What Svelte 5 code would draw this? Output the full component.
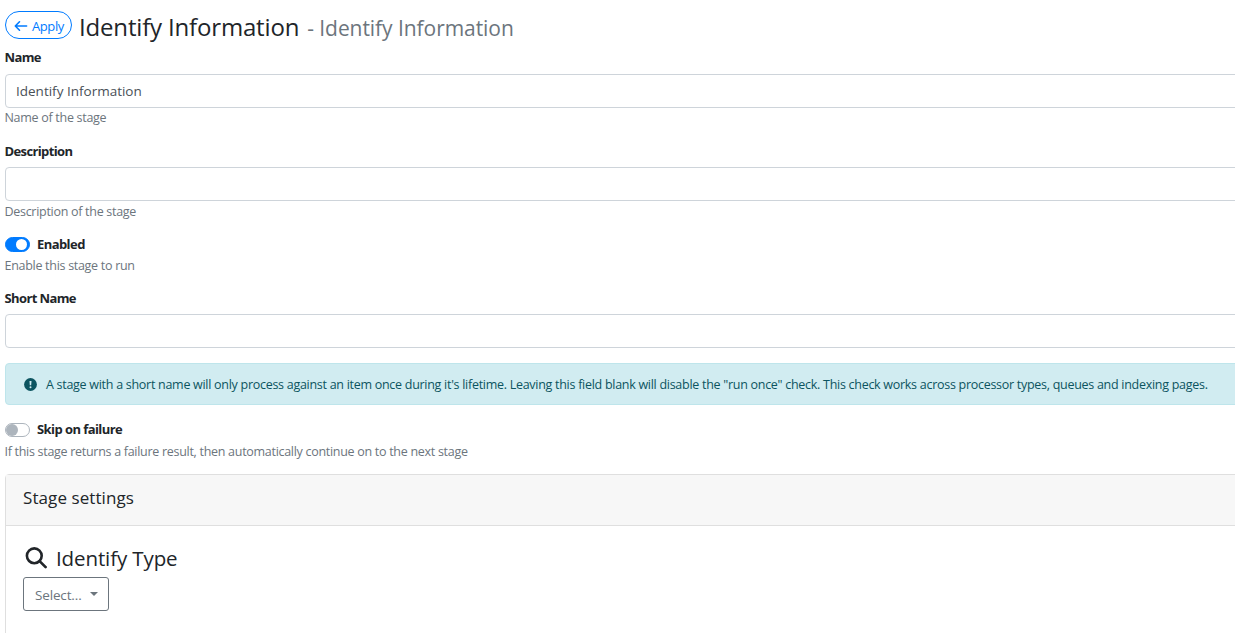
<script>
  let name = $state('Identify Information');
  let description = $state('');
  let shortName = $state('');
  let enabled = $state(true);
  let skip = $state(false);
</script>

<main class="viewport">
  <div class="form">
    <header class="title">
      <button class="apply">
        <svg width="14" height="14" viewBox="0 0 14 14" fill="none" stroke="currentColor" stroke-width="1.6" stroke-linecap="round" stroke-linejoin="round"><path d="M12.6 7H1.4M5.5 2.8 1.3 7l4.2 4.2" /></svg>
        <span>Apply</span>
      </button>
      <h1>Identify Information</h1>
      <span class="sub">- Identify Information</span>
    </header>

    <section class="group first">
      <label class="label" for="name">Name</label>
      <input id="name" type="text" bind:value={name} />
      <small class="help">Name of the stage</small>
    </section>

    <section class="group described">
      <label class="label" for="description">Description</label>
      <input id="description" type="text" bind:value={description} />
      <small class="help">Description of the stage</small>
    </section>

    <section class="switch-group enabled">
      <label class="switch">
        <input type="checkbox" bind:checked={enabled} />
        <span class="track" class:on={enabled}></span>
        <span class="label">Enabled</span>
      </label>
      <small class="help">Enable this stage to run</small>
    </section>

    <section class="group short">
      <label class="label" for="short">Short Name</label>
      <input id="short" type="text" bind:value={shortName} />
    </section>

    <div class="alert">
      <svg width="13" height="13" viewBox="0 0 13 13"><circle cx="6.5" cy="6.5" r="6.4" fill="#0c5460" /><path d="M5.5 2.9h2l-.3 4.3H5.8z" fill="#d1ecf1" /><circle cx="6.5" cy="9.2" r="1" fill="#d1ecf1" /></svg>
      <span>A stage with a short name will only process against an item once during it's lifetime. Leaving this field blank will disable the "run once" check. This check works across processor types, queues and indexing pages.</span>
    </div>

    <section class="switch-group skip">
      <label class="switch">
        <input type="checkbox" bind:checked={skip} />
        <span class="track" class:on={skip}></span>
        <span class="label">Skip on failure</span>
      </label>
      <small class="help">If this stage returns a failure result, then automatically continue on to the next stage</small>
    </section>

    <section class="card">
      <div class="card-header"><span>Stage settings</span></div>
      <div class="card-body">
        <h2>
          <svg width="22" height="22" viewBox="0 0 22 22" fill="none" stroke="#212529" stroke-width="2.6"><circle cx="9.3" cy="8.8" r="7.4" /><path d="m14.6 14.1 6 6" stroke-linecap="round" stroke-width="2.7" /></svg>
          <span>Identify Type</span>
        </h2>
        <button class="select"><span>Select...</span><i class="caret"></i></button>
      </div>
    </section>
  </div>
</main>

<style>
  :global(body) { background: #fff; overflow: hidden; }
  * { box-sizing: border-box; }
  .viewport {
    height: 633px; overflow: hidden; color: #212529;
    font-family: "Open Sans", "Noto Sans", sans-serif; font-size: 13px; line-height: 20px;
  }
  .form { width: 1250px; padding-left: 5px; }
  span, h1 { white-space: nowrap; }
  .title { display: flex; align-items: flex-start; height: 47px; padding-top: 11px; }
  .apply {
    display: flex; align-items: center; gap: 4px; width: 67px; height: 28px; padding: 2px 0 0 8px;
    border: 1px solid #007bff; border-radius: 14px; background: #fff; color: #007bff;
    font: 13px/20px "Open Sans", sans-serif; letter-spacing: -0.4px;
  }
  .apply svg { flex: none; }
  h1 { margin: 1px 0 0 7px; font-size: 24px; font-weight: 400; line-height: 30px; letter-spacing: -0.17px; }
  .sub { margin: 2px 0 0 8px; color: #6c757d; font-size: 21px; line-height: 30px; letter-spacing: -0.06px; }
  .group { display: flex; flex-direction: column; height: 93px; }
  .label { font-weight: 700; letter-spacing: -0.62px; height: 20px; }
  .group .label { margin: 0 0 6px -0.5px; }
  .group.first .label { margin-bottom: 7px; }
  .group.first { height: 94px; }
  input[type="text"] {
    height: 34px; padding: 0 10px; border: 1px solid #ced4da; border-radius: 4px; background: #fff;
    color: #495057; font: 13.5px "Open Sans", sans-serif; outline: none; letter-spacing: 0;
  }
  .help { display: block; margin-left: -0.5px; color: #6c757d; font-size: 12.5px; line-height: 20px; letter-spacing: -0.29px; white-space: nowrap; }
  .described .help { margin-top: 1px; }
  .switch-group { display: flex; flex-direction: column; }
  .enabled { height: 54px; }
  .switch { display: flex; align-items: center; gap: 7px; height: 21px; }
  .switch .label { height: 22px; letter-spacing: -0.57px; }
  .switch input { display: none; }
  .track {
    display: flex; align-items: center; width: 25px; height: 14px; border: 1px solid #adb5bd;
    border-radius: 8px; background: #fff; flex: none;
  }
  .track::before { content: ""; width: 12px; height: 12px; border-radius: 50%; background: #adb5bd; }
  .track.on { height: 15px; border-color: #007bff; background: #007bff; justify-content: flex-end; padding-right: 2px; }
  .track.on::before { width: 11px; height: 11px; background: #fff; }
  .enabled .help { margin-top: 1px; }
  .group.short { height: 75px; }
  .alert {
    display: flex; align-items: center; gap: 9px; height: 42px; padding-left: 18px; font-size: 12.5px;
    border: 1px solid #bee5eb; border-radius: 4px; background: #d1ecf1; color: #0c5460; letter-spacing: -0.28px;
  }
  .alert svg { flex: none; }
  .alert span { padding-top: 2px; }
  .skip { margin-top: 14px; height: 55px; }
  .skip .help { margin-top: 2px; }
  .card { height: 200px; border: 1px solid #dfdfdf; border-radius: 4px; }
  .card-header { height: 51px; padding: 11px 17px; border-bottom: 1px solid #dfdfdf; background: #f7f7f7; font-size: 17px; line-height: 24px; letter-spacing: 0.08px; }
  .card-body { padding: 16px 17px; }
  h2 { display: flex; align-items: center; gap: 9px; height: 31px; margin: 0 0 4px; padding-left: 2px; font-size: 20.5px; font-weight: 400; line-height: 30px; letter-spacing: -0.11px; }
  .select {
    display: flex; align-items: center; gap: 8px; width: 86px; height: 34px; padding: 1px 0 0 11px;
    border: 1px solid #6c757d; border-radius: 3px; background: #fff; color: #6c757d;
    font: 13.5px "Open Sans", sans-serif; letter-spacing: -0.15px;
  }
  .caret { margin-top: -2px; border-top: 4px solid; border-left: 4px solid transparent; border-right: 4px solid transparent; }
</style>
